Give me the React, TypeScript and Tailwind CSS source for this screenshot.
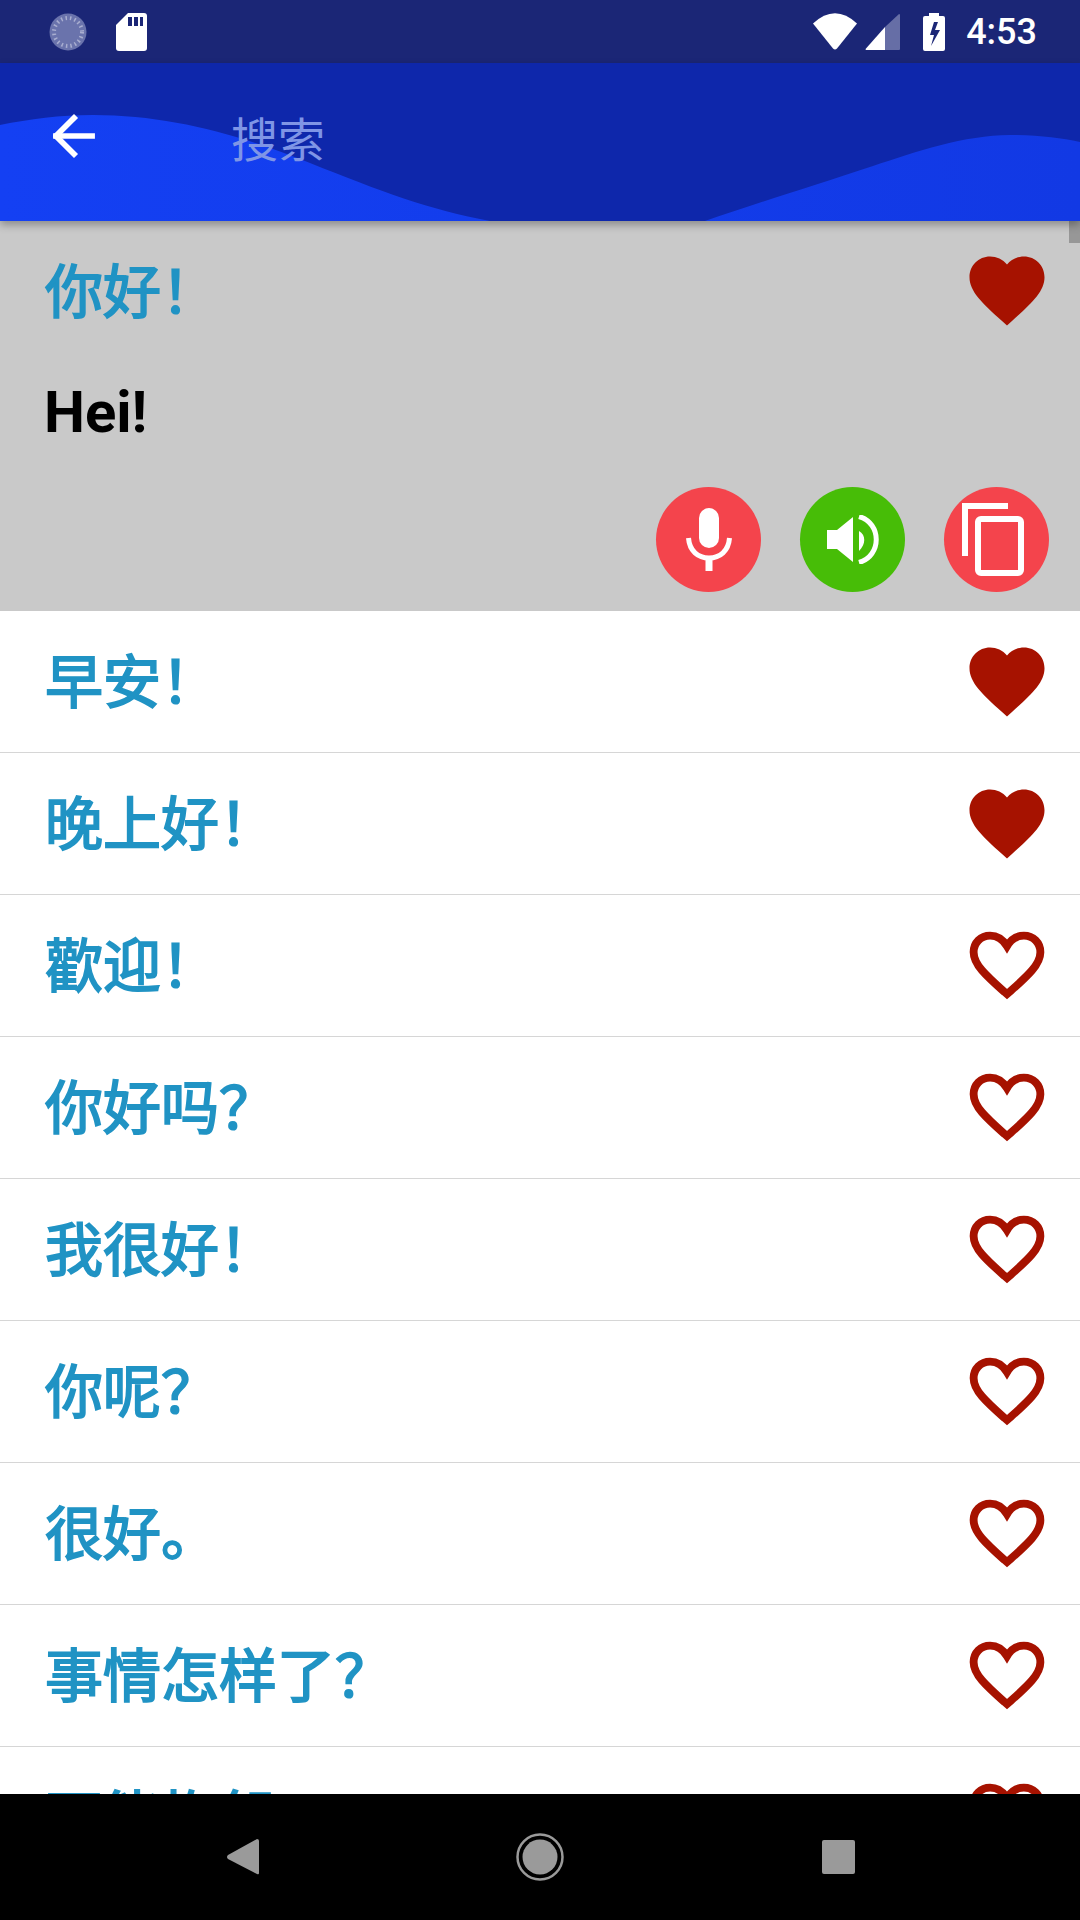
import React from 'react';
import { ArrowLeft } from 'lucide-react';

const cjk = "font-['Noto_Sans_CJK_SC','Noto_Sans',sans-serif]";
// the installed CJK family has no usable medium cut, so thicken the regular one
const phrase = `mb-[7px] text-[58px] leading-none text-[#2093c4] [-webkit-text-stroke:1.8px_#2093c4] ${cjk}`;

const rows = [
  { text: '早安！', liked: true },
  { text: '晚上好！', liked: true },
  { text: '歡迎！', liked: false },
  { text: '你好吗？', liked: false },
  { text: '我很好！', liked: false },
  { text: '你呢？', liked: false },
  { text: '很好。', liked: false },
  { text: '事情怎样了？', liked: false },
  { text: '不能抱怨', liked: false },
];

const HEART = 'M12 21.2 10.6 19.9C5.4 15.2 2 12.1 2 8.3 2 5.2 4.4 2.8 7.5 2.8 9.2 2.8 10.9 3.6 12 4.9 13.1 3.6 14.8 2.8 16.5 2.8 19.6 2.8 22 5.2 22 8.3 22 12.1 18.6 15.2 13.4 19.9Z';

const Heart: React.FC<{ liked: boolean }> = ({ liked }) => (
  <svg viewBox="0 0 24 24" className="w-[90px] h-[90px] shrink-0">
    {liked ? (
      <path d={HEART} fill="#a61200" />
    ) : (
      <path
        d="M12 19.5 11.3 18.900C6.500 14.600 3.100 11.600 3.100 8.300 3.100 5.800 5 3.900 7.500 3.900 9.200 3.900 10.900 4.900 12 6.700 13.100 4.900 14.800 3.900 16.500 3.900 19 3.900 20.900 5.800 20.900 8.300 20.900 11.600 17.500 14.600 12.700 18.900Z"
        fill="none"
        stroke="#a61200"
        strokeWidth="2.100"
      />
    )}
  </svg>
);

const StatusBar = () => (
  <div className="h-[63px] shrink-0 bg-[#1b2676] flex items-center pl-[49px] pr-[43px] text-white">
    <svg viewBox="0 0 38 38" className="w-[38px] h-[38px]">
      <circle cx="19" cy="19" r="18.500" fill="#6a73ac" />
      <path d="M36 12a18.500 18.500 0 0 1-26 24 18.500 18.500 0 0 0 26-24Z" fill="#fff" />
      <circle cx="19" cy="19" r="14" fill="none" stroke="#a9aed0" strokeWidth="4" strokeDasharray="1.500 3" />
    </svg>
    <svg viewBox="0 0 31 38" className="w-[31px] h-[38px] ml-[29px]">
      <path d="M12 0H28a3 3 0 0 1 3 3V35a3 3 0 0 1-3 3H3a3 3 0 0 1-3-3V12Z" fill="#fff" />
      <path d="M12 4h4v9h-4ZM18 4h4v9h-4ZM24 4h3v9h-3Z" fill="#1b2676" />
    </svg>
    <div className="flex-1" />
    <svg viewBox="0 0 44 37" className="w-[44px] h-[37px]">
      <path d="M0 10.500Q22-10 44 10.500L24 35.500Q22 37.500 20 35.500Z" fill="#fff" />
    </svg>
    <svg viewBox="0 0 35 36" className="w-[35px] h-[36px] ml-[8px]">
      <path d="M34 0a1 1 0 0 1 1 1V35a1 1 0 0 1-1 1H20V13Z" fill="#666ea6" />
      <path d="M20 13V36H1Q0 36 1 34.500Z" fill="#fff" />
    </svg>
    <svg viewBox="0 0 22 38" className="w-[22px] h-[38px] ml-[23px]">
      <path d="M6 0h10v3h4a2 2 0 0 1 2 2V36a2 2 0 0 1-2 2H2a2 2 0 0 1-2-2V5a2 2 0 0 1 2-2h4Z" fill="#fff" />
      <path d="M11 9 7 22H11L8 33 17 17H12L15 9Z" fill="#1b2676" />
    </svg>
    <span className="ml-[21px] font-['Roboto',sans-serif] font-medium text-[36px] leading-none">4:53</span>
  </div>
);

const Header = () => (
  <div className="relative z-10 h-[158px] shrink-0 bg-[#0e27ab] flex items-center pb-[12px] shadow-[0_4px_8px_rgba(0,0,0,0.3)]">
    <svg viewBox="0 0 1080 158" preserveAspectRatio="none" className="absolute inset-0 w-full h-full">
      <defs>
        <linearGradient id="wave" x1="0" y1="0" x2="1" y2="0">
          <stop offset="0" stopColor="#1440f3" />
          <stop offset="1" stopColor="#1239e4" />
        </linearGradient>
      </defs>
      <path
        d="M0 62C30 56 60 52 93 52 170 52 240 72 310 100 380 128 430 147 490 158H705C750 142 810 124 873 103 915 89 965 72 1010 72 1040 72 1060 75 1080 79V158H0Z"
        fill="url(#wave)"
      />
    </svg>
    <ArrowLeft className="relative ml-[43px] w-[62px] h-[62px] text-white" strokeWidth={2.2} strokeLinecap="square" />
    <span className={`relative ml-[126px] text-[47px] leading-none text-[#7f95e6] ${cjk}`}>搜索</span>
  </div>
);

const Fab: React.FC<{ color: string; children: React.ReactNode }> = ({ color, children }) => (
  <div className={`w-[105px] h-[105px] rounded-full flex items-center justify-center ${color}`}>{children}</div>
);

const Expanded = () => (
  <div className="relative h-[390px] bg-[#c9c9c9] pl-[45px] pr-[31px] pt-[25px]">
    <div className="absolute right-0 top-0 w-[11px] h-[22px] bg-[#979797]" />
    <div className="flex items-center justify-between mr-[-3px] h-[90px]">
      <span className={phrase}>你好！</span>
      <Heart liked />
    </div>
    <div className="mt-[44px] ml-[-1px] font-['Roboto',sans-serif] font-bold text-[58px] leading-[64px] text-black">Hei!</div>
    <div className="mt-[43px] flex justify-end gap-[39px]">
      <Fab color="bg-[#f4444c]">
        <svg viewBox="0 0 46 63" className="w-[46px] h-[63px]">
          <rect x="13" y="0" width="20" height="40" rx="10" fill="#fff" />
          <path d="M2.500 30C3.500 43 12 50 23 50S42.500 43 43.500 30" fill="none" stroke="#fff" strokeWidth="5" />
          <rect x="19.500" y="48" width="7" height="15" fill="#fff" />
        </svg>
      </Fab>
      <Fab color="bg-[#47bd07]">
        <svg viewBox="0 0 52 49" className="w-[52px] h-[49px]">
          <path d="M0 15H10L26 2V47L10 34H0Z" fill="#fff" />
          <path d="M32 16C39 20 39 29 32 36Z" fill="#fff" />
          <path d="M32 1.500C55 8 55 41 32 47.500" fill="none" stroke="#fff" strokeWidth="5" />
        </svg>
      </Fab>
      <Fab color="bg-[#f4444c]">
        <svg viewBox="0 0 62 73" className="w-[62px] h-[73px] mr-[8px]">
          <path d="M46 3H3V53" fill="none" stroke="#fff" strokeWidth="6" />
          <rect x="16" y="16" width="43" height="54" rx="3" fill="none" stroke="#fff" strokeWidth="6" />
        </svg>
      </Fab>
    </div>
  </div>
);

const NavBar = () => (
  <div className="h-[126px] shrink-0 bg-black flex items-center justify-center">
    <div className="w-[298px] flex justify-center">
      <svg viewBox="0 0 33 36" className="w-[33px] h-[36px]">
        <path d="M31 0Q33 0 33 2V34Q33 36 31 35L2 20Q0 18 2 16Z" fill="#9a9a9a" />
      </svg>
    </div>
    <div className="w-[298px] flex justify-center">
      <svg viewBox="0 0 48 48" className="w-[48px] h-[48px]">
        <circle cx="24" cy="24" r="22.500" fill="none" stroke="#9a9a9a" strokeWidth="2.500" />
        <circle cx="24" cy="24" r="17.500" fill="#9a9a9a" />
      </svg>
    </div>
    <div className="w-[298px] flex justify-center">
      <div className="w-[33px] h-[34px] rounded-[2px] bg-[#9a9a9a]" />
    </div>
  </div>
);

export default function App() {
  return (
    <div className="w-[1080px] h-[1920px] flex flex-col overflow-hidden bg-white">
      <StatusBar />
      <Header />
      <div className="flex-1 overflow-hidden">
        <Expanded />
        {rows.map(r => (
          <div
            key={r.text}
            className="h-[142px] border-b-[1.500px] border-[#d6d6d6] flex items-center justify-between pl-[45px] pr-[28px]"
          >
            <span className={phrase}>{r.text}</span>
            <Heart liked={r.liked} />
          </div>
        ))}
      </div>
      <NavBar />
    </div>
  );
}
